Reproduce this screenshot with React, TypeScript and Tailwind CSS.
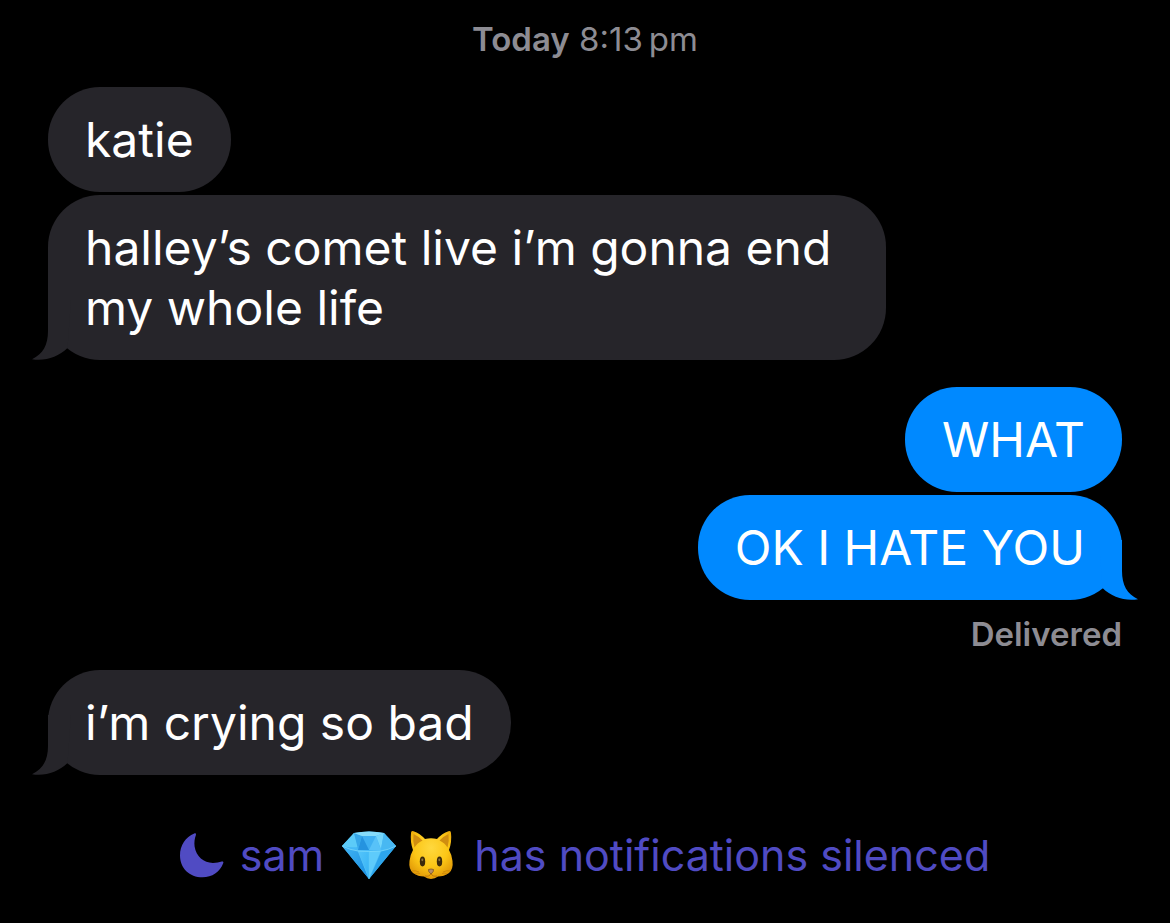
import type { ReactNode } from "react";

function Tail({ side }: { side: "left" | "right" }) {
  return (
    <svg
      aria-hidden="true"
      viewBox="0 0 40 60"
      className={
        side === "left"
          ? "absolute bottom-0 -left-4 h-[60px] w-10 fill-[#26252a]"
          : "absolute bottom-0 -right-4 h-[60px] w-10 -scale-x-100 fill-[#0089ff]"
      }
    >
      <path d="M16 0V31C16 45 11 54 0 59.2C13 61.500 26 57 35.500 48L39 0Z" />
    </svg>
  );
}

function Bubble({ mine = false, tail = false, children }: { mine?: boolean; tail?: boolean; children: ReactNode }) {
  return (
    <div
      className={
        mine
          ? "relative max-w-[78%] self-end rounded-[52px] bg-[#0089ff] px-[37px] pt-[23px] pb-[22px]"
          : "relative max-w-[78%] self-start rounded-[52px] bg-[#26252a] px-[37px] pt-[23px] pb-[22px]"
      }
    >
      {tail && <Tail side={mine ? "right" : "left"} />}
      <p className="relative text-5xl leading-[60px] text-white">{children}</p>
    </div>
  );
}

function Moon() {
  return (
    <svg aria-hidden="true" viewBox="0 0 44 45" className="h-[45px] w-11 shrink-0 fill-[#504bc3]">
      <path d="M14.300 .5C15.500 0 16.300 .7 15.900 2C14.600 5.500 14.100 9.500 14.600 13.500C16 23.500 24 30 33 29.900C36.500 29.900 39.300 29.300 41.700 28.500C43 28.100 43.700 28.800 43.300 30C40 39 32 44.300 22.500 44.300C9.500 44.300 0 35 0 22.400C0 12.500 5.600 4 14.300 .5Z" />
    </svg>
  );
}

function Gem() {
  return (
    <svg role="img" aria-label="gem" viewBox="0 0 54 48" className="h-12 w-[54px] shrink-0">
      <defs>
        <linearGradient id="gemLeft" x1="0" y1="0" x2="1" y2="1">
          <stop offset="0" stopColor="#43b5f4" />
          <stop offset="1" stopColor="#168ce0" />
        </linearGradient>
        <linearGradient id="gemMid" x1="0" y1="0" x2="1" y2="1">
          <stop offset="0" stopColor="#55c5fa" />
          <stop offset="1" stopColor="#35b2f5" />
        </linearGradient>
      </defs>
      <path d="M12 2Q27-1 42 2L54 15L27 48L0 15Z" fill="#45b9f6" />
      <path d="M12 2L16 16Q8 17 0 15Z" fill="#5ccbf8" />
      <path d="M12 2L20 5L16 18Z" fill="#36a6e8" />
      <path d="M12 2Q27-1 42 2L34 5H20Z" fill="#86dcfa" />
      <path d="M20 5H34L39 19H16Z" fill="#3fb0f2" />
      <path d="M20 5L16 19H27Z" fill="#2593df" />
      <path d="M34 5L27 19H39Z" fill="#58c2f8" />
      <path d="M42 2L34 5L39 18Z" fill="#74d6fb" />
      <path d="M42 2L54 15Q46 18 39 18Z" fill="#48b8f2" />
      <path d="M0 15Q8 19 16 20L27 48Z" fill="url(#gemLeft)" />
      <path d="M16 20H27V48Z" fill="url(#gemMid)" />
      <path d="M27 20H39L27 48Z" fill="#5ecbfb" />
      <path d="M39 20Q46 19 54 15L27 48Z" fill="#2da5ec" />
      <path d="M0 15Q8 19 16 20Q27 21 39 20Q46 19 54 15" fill="none" stroke="#84dcfb" strokeWidth=".7" />
      <path d="M16 20L27 48L39 20M27 20V48" fill="none" stroke="#62caf8" strokeWidth=".4" />
    </svg>
  );
}

function Cat() {
  return (
    <svg role="img" aria-label="cat face" viewBox="0 0 46 50" className="h-[50px] w-[46px] shrink-0">
      <defs>
        <radialGradient id="catFace" cx=".5" cy=".35" r=".65">
          <stop offset="0" stopColor="#ffd83e" />
          <stop offset=".6" stopColor="#fcc616" />
          <stop offset="1" stopColor="#e29a08" />
        </radialGradient>
      </defs>
      <path
        d="M3 3Q3 .5 5.500 1.200Q12 3.500 17 9Q23 7.500 29 9Q34 3.500 40.500 1.200Q43 .5 43 3Q44 12 41 20Q44 25 44.500 31Q45.500 39 41 43Q36 46.500 30 46.500Q27 48.500 23 49Q19 48.500 16 46.500Q10 46.500 5 43Q.5 39 1.500 31Q2 25 5 20Q2 12 3 3Z"
        fill="url(#catFace)"
      />
      <path d="M5.500 4Q11 6.500 14.500 10.500Q9 13 6.500 17.500Q4.500 11 5.500 4Z" fill="#d08d10" />
      <path d="M40.500 4Q35 6.500 31.500 10.500Q37 13 39.500 17.500Q41.500 11 40.500 4Z" fill="#d08d10" />
      <ellipse cx="14.500" cy="31.500" rx="2.700" ry="4.900" fill="#3c2a0b" />
      <ellipse cx="31.500" cy="31.500" rx="2.700" ry="4.900" fill="#3c2a0b" />
      <ellipse cx="14.300" cy="29.800" rx="1" ry="1.400" fill="#8c7440" />
      <ellipse cx="31.300" cy="29.800" rx="1" ry="1.400" fill="#8c7440" />
      <path d="M4 41Q7 40 11 42M7 44Q9 42.500 12 43.500M42 41Q39 40 35 42M39 44Q37 42.500 34 43.500" fill="none" stroke="#c07a08" strokeWidth=".6" />
      <path d="M17 46Q21.500 47 23 43.500Q24.500 47 29 46" fill="none" stroke="#b96f0b" strokeWidth=".9" />
      <path d="M20.500 39.500Q23 38.500 25.500 39.500Q26 41.500 23 44Q20 41.500 20.500 39.500Z" fill="#b58b6a" stroke="#7d5520" strokeWidth=".8" />
    </svg>
  );
}

export default function App() {
  return (
    <main className="flex min-h-screen flex-col bg-black px-12 pt-[19px] pb-9 font-['Inter','Liberation_Sans',sans-serif]">
      <p className="text-center text-[33px] leading-10 text-[#8d8c93]">
        <span className="font-semibold">Today</span> 8:13{"\u2009"}pm
      </p>
      <section aria-label="Messages" className="mt-7 flex flex-col">
        <div className="flex flex-col gap-[3px]">
          <Bubble>katie</Bubble>
          <Bubble tail>halley’s comet live i’m gonna end my whole life</Bubble>
        </div>
        <div className="mt-[27px] flex flex-col gap-[3px]">
          <Bubble mine>WHAT</Bubble>
          <Bubble mine tail>OK I HATE YOU</Bubble>
        </div>
        <p className="mt-3.5 text-right text-[33px] leading-10 font-semibold text-[#8d8c93]">Delivered</p>
        <div className="mt-4 flex flex-col">
          <Bubble tail>i’m crying so bad</Bubble>
        </div>
      </section>
      <p className="mt-[50px] flex items-center justify-center text-[43px] leading-[60px] text-[#504bc3]">
        <Moon />
        <span className="ml-4">sam</span>
        <span className="mr-5 ml-[18px] flex items-center gap-3">
          <Gem />
          <Cat />
        </span>
        <span>has notifications silenced</span>
      </p>
    </main>
  );
}
